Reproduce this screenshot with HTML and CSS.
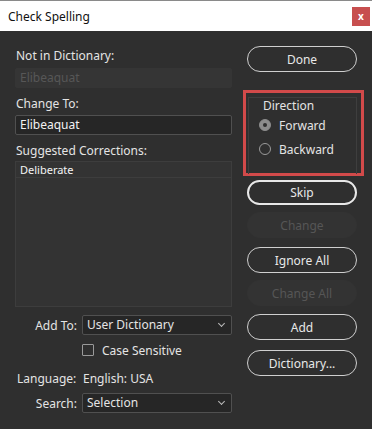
FILE: index.html
```html
<!DOCTYPE html>
<html lang="en">
<head>
  <meta charset="UTF-8">
  <title>Check Spelling</title>
  <link rel="stylesheet" href="styles.css">
</head>
<body>
  <div class="window">
    <div class="titlebar">
      <span class="title">Check Spelling</span>
      <span class="close">x</span>
    </div>
    <div class="content">
      <div class="left">
        <div class="label first">Not in Dictionary:</div>
        <div class="field disabled">Elibeaquat</div>
        <div class="label">Change To:</div>
        <div class="field">Elibeaquat</div>
        <div class="label">Suggested Corrections:</div>
        <div class="list">
          <div class="list-row">Deliberate</div>
        </div>
        <div class="row add-row">
          <span class="row-label">Add To:</span>
          <div class="select">User Dictionary<span class="chev"></span></div>
        </div>
        <div class="row check-row">
          <span class="row-label"></span>
          <span class="checkbox"></span>Case Sensitive
        </div>
        <div class="row lang-row">
          <span class="row-label">Language:</span>
          <span>English: USA</span>
        </div>
        <div class="row search-row">
          <span class="row-label">Search:</span>
          <div class="select">Selection<span class="chev"></span></div>
        </div>
      </div>
      <div class="right">
        <button class="btn done">Done</button>
        <div class="highlight">
          <div class="group">
            <div class="legend">Direction</div>
            <div class="radio"><span class="dot on"></span>Forward</div>
            <div class="radio second"><span class="dot"></span>Backward</div>
          </div>
        </div>
        <button class="btn focus">Skip</button>
        <button class="btn off change">Change</button>
        <button class="btn ignore">Ignore All</button>
        <button class="btn off change-all">Change All</button>
        <button class="btn add">Add</button>
        <button class="btn dict">Dictionary...</button>
      </div>
    </div>
  </div>
</body>
</html>
```
FILE: styles.css
```css
body { margin: 0; background: #2f2f2f; font-family: "Noto Sans", Arial, sans-serif; font-size: 12px; color: #e4e4e4; }
.window { width: 372px; height: 429px; overflow: hidden; }

.titlebar { height: 30px; background: #fff; border-top: 1px solid #8a8a8a; display: flex; align-items: center; justify-content: space-between; }
.title { color: #111; margin-left: 8px; font-size: 12px; }
.close { width: 18px; height: 19px; margin-right: 2px; background: #c74f4f; color: #fff; font-size: 10px; font-weight: bold; display: flex; align-items: center; justify-content: center; }

.content { display: flex; }
.left { width: 217px; margin-left: 15px; }
.label { height: 16px; line-height: 16px; margin: 8px 0 2px 1px; }
.label.first { margin: 17px 0 4px 1px; }
.label:nth-of-type(3) { margin-bottom: 3px; }
.field { height: 18px; line-height: 18px; padding-left: 4px; background: #262626; border: 1px solid #505050; border-radius: 2px; color: #f2f2f2; }
.field.disabled { background: #353535; border-color: #353535; color: #575757; }

.list { box-sizing: border-box; height: 146px; background: #333; border: 1px solid #3d3d3d; }
.list-row { height: 15px; line-height: 15px; padding-left: 4px; font-size: 11px; color: #f4f4f4; border-bottom: 1px solid #3d3d3d; }

.row { display: flex; align-items: center; }
.row-label { width: 62px; text-align: right; margin-right: 5px; }
.lang-row .row-label { width: 66px; text-align: left; margin-left: 2px; margin-right: 0; }
.add-row { margin-top: 8px; }
.check-row { margin-top: 8px; height: 14px; }
.lang-row { margin-top: 13px; height: 16px; }
.search-row { margin-top: 7px; }
.select { flex: 1; position: relative; height: 18px; line-height: 18px; padding-left: 4px; background: #262626; border: 1px solid #505050; border-radius: 2px; }
.chev { position: absolute; right: 7px; top: 5px; width: 4px; height: 4px; border-right: 1px solid #bbb; border-bottom: 1px solid #bbb; transform: rotate(45deg); }
.checkbox { width: 10px; height: 10px; border: 1px solid #9a9a9a; border-radius: 1px; margin-right: 8px; }

.right { width: 121px; margin-left: 11px; display: flex; flex-direction: column; align-items: flex-start; }
.btn { box-sizing: border-box; width: 110px; height: 26px; margin-left: 4px; border: 1px solid #cfcfcf; border-radius: 13px; background: #2f2f2f; color: #e8e8e8; font: inherit; padding: 0; }
.btn.done { margin-top: 15px; }
.btn.focus { border: 2px solid #e8e8e8; margin-top: 4px; height: 25px; }
.btn.off { border-color: #333; background: #333; color: #565656; }
.btn.change { margin-top: 7px; }
.btn.ignore { margin-top: 9px; }
.btn.change-all { margin-top: 7px; }
.btn.add { margin-top: 8px; }
.btn.dict { margin-top: 10px; }

.highlight { margin-top: 18px; width: 115px; height: 80px; border: 3px solid #d24a4a; }
.group { margin: 4px 4px 0 2px; height: 76px; border: 1px solid #3e3e3e; border-bottom: none; }
.legend { margin: 0 0 0 14px; height: 16px; line-height: 16px; }
.radio { display: flex; align-items: center; height: 16px; margin-top: 3px; }
.radio.second { margin-top: 8px; }
.dot { box-sizing: border-box; width: 12px; height: 12px; border-radius: 50%; border: 1px solid #9a9a9a; margin: 0 8px 0 10px; position: relative; }
.dot.on { background: #8c8c8c; border-color: #8c8c8c; }
.dot.on::after { content: ""; position: absolute; left: 3px; top: 3px; width: 4px; height: 4px; border-radius: 50%; background: #2f2f2f; }
```
